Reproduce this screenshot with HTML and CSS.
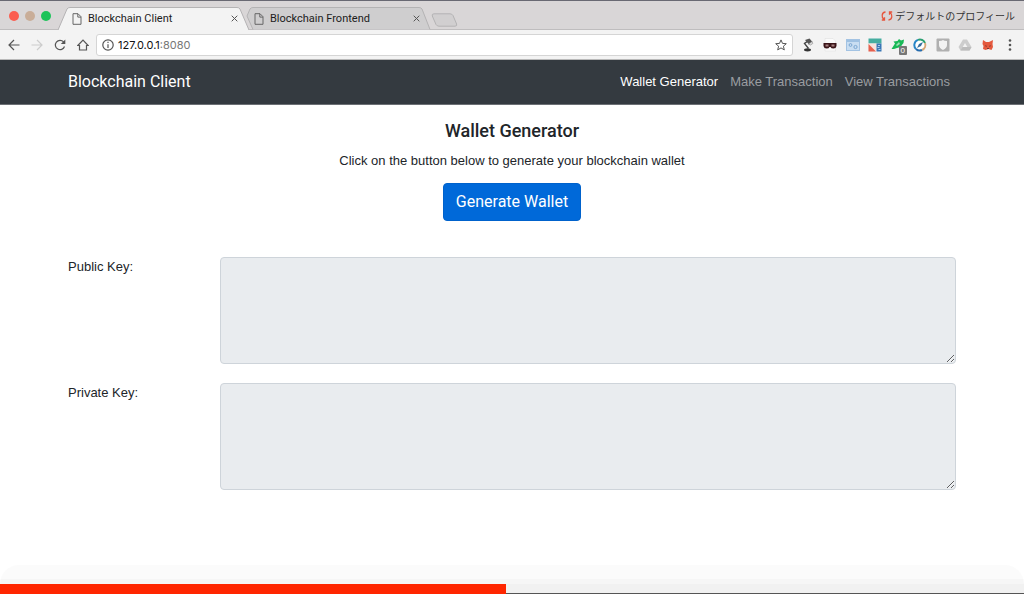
FILE: index.html
```html
<!DOCTYPE html>
<html lang="en">
<head>
<meta charset="utf-8">
<meta name="viewport" content="width=device-width, initial-scale=1">
<title>Blockchain Client</title>
<link rel="stylesheet" href="styles.css">
</head>
<body>
<header class="browser">
  <div class="tab-strip">
    <div class="lights">
      <button class="light light-close" aria-label="Close window"></button>
      <button class="light light-min" aria-label="Minimise window"></button>
      <button class="light light-max" aria-label="Maximise window"></button>
    </div>
    <div class="tabs">
      <div class="tab tab-active">
        <svg class="tab-shape" viewBox="0 0 191 23" preserveAspectRatio="none" aria-hidden="true"><path d="M0 23 L9 2 Q10 .5 12 .5 H179 Q181 .5 182 2 L191 23"/></svg>
        <svg class="page-icon" viewBox="0 0 10 12" aria-hidden="true"><path d="M1 .7h5l3 3v7.6H1zM5.8.9v3.2H9"/></svg>
        <span class="tab-title">Blockchain Client</span>
        <button class="tab-close" aria-label="Close tab"><svg viewBox="0 0 7 7" aria-hidden="true"><path d="M.7.7l5.6 5.6M6.3.7L.7 6.3"/></svg></button>
      </div>
      <div class="tab tab-back">
        <svg class="tab-shape" viewBox="0 0 191 23" preserveAspectRatio="none" aria-hidden="true"><path d="M13 22.5 L7 9 L10 2 Q11 .5 13 .5 H179 Q181 .5 182 2 L190 22.5"/></svg>
        <svg class="page-icon" viewBox="0 0 10 12" aria-hidden="true"><path d="M1 .7h5l3 3v7.6H1zM5.8.9v3.2H9"/></svg>
        <span class="tab-title">Blockchain Frontend</span>
        <button class="tab-close" aria-label="Close tab"><svg viewBox="0 0 7 7" aria-hidden="true"><path d="M.7.7l5.6 5.6M6.3.7L.7 6.3"/></svg></button>
      </div>
      <button class="new-tab" aria-label="New tab"><svg viewBox="0 0 27 14" aria-hidden="true"><path d="M3 .8H19Q21 .8 22 2.5L25.6 11Q26.3 13.2 24 13.2H8Q6 13.2 5 11.5L1.3 3Q.6 .8 3 .8z"/></svg></button>
    </div>
    <button class="profile"><svg viewBox="0 0 12 10" aria-hidden="true"><path d="M4.500 1C.5 1.200.2 6.500 3 8.500M.8 9H3.500V6.300M7.500 9C11.500 8.800 11.800 3.500 9 1.500M11.200 1H8.500V3.700"/></svg>デフォルトのプロフィール</button>
  </div>
  <div class="toolbar">
    <div class="nav-buttons">
      <button class="tool" aria-label="Back"><svg viewBox="0 0 12 12" aria-hidden="true"><path d="M11.500 6H1M6 1L1 6l5 5"/></svg></button>
      <button class="tool tool-off" aria-label="Forward" disabled><svg viewBox="0 0 12 12" aria-hidden="true"><path d="M.5 6H11M6 1l5 5-5 5"/></svg></button>
      <button class="tool" aria-label="Reload"><svg viewBox="0 0 12 12" aria-hidden="true"><path d="M10.500 7.500A4.700 4.700 0 1 1 9.600 2.900"/><path class="solid" d="M11.300.5V5H6.800z"/></svg></button>
      <button class="tool" aria-label="Home"><svg viewBox="0 0 12 12" aria-hidden="true"><path d="M.8 6.500L6 1.200l5.200 5.300H9.500V11h-7V6.500z"/></svg></button>
    </div>
    <div class="address">
      <svg class="info" viewBox="0 0 12 12" aria-hidden="true"><circle cx="6" cy="6" r="5.200"/><path d="M6 5.200V9M6 2.800V4"/></svg>
      <a class="url" href="#"><span class="host">127.0.0.1</span>:8080</a>
      <button class="star" aria-label="Bookmark this page"><svg viewBox="0 0 12 12" aria-hidden="true"><path d="M6 .9l1.500 3.500 3.800.3-2.900 2.500.9 3.700L6 8.900l-3.300 2 .9-3.700L.7 4.700l3.800-.3z"/></svg></button>
    </div>
    <div class="extensions">
      <button class="ext" aria-label="Lamp"><svg viewBox="0 0 14 14" aria-hidden="true"><path d="M7 3L3.500 5.500l4 5" fill="none" stroke="#444" stroke-width="1.400"/><path d="M4 2l4.500-1.500L11.500 4 8 6.500z" fill="#555"/><path d="M7.500 6l3.500-2.500.8 2L9.500 7z" fill="#ddd" stroke="#777" stroke-width=".5"/><ellipse cx="6.500" cy="11.800" rx="3.500" ry="1.600" fill="#333"/></svg></button>
      <button class="ext" aria-label="Mask"><svg viewBox="0 0 14 14" aria-hidden="true"><path d="M2 .5h8l2.500 2.500V13H2z" fill="#fafafa" stroke="#ddd" stroke-width=".5"/><path d="M.5 5h13v3q-.5 2.500-3 2.500T7.500 9h-1q-.5 1.500-3 1.500T.5 8z" fill="#3a1518"/><path d="M2.500 6.500h3v2h-3zM8.500 6.500h3v2h-3z" fill="#a68080"/></svg></button>
      <button class="ext" aria-label="Window settings"><svg viewBox="0 0 14 14" aria-hidden="true"><rect x=".5" y="1.500" width="13" height="11" fill="#c9def2" stroke="#a3c3e3"/><path d="M1 2h12v2H1z" fill="#9fc1e2"/><circle cx="4.500" cy="7" r="1.400" fill="none" stroke="#7ba7d2"/><circle cx="9.500" cy="9" r="1.600" fill="none" stroke="#7ba7d2"/></svg></button>
      <button class="ext" aria-label="Measure"><svg viewBox="0 0 14 14" aria-hidden="true"><path d="M.5 .5h13v5H.5z" fill="#45ada0"/><path d="M.5 5.500h8v8h-8z" fill="#f7e3de"/><path d="M.5 6L8 13.500H.5z" fill="#e5604e"/><path d="M8.500 5.500h5v8h-5z" fill="#3976b5"/><path d="M10 7h2v1h-2zM9.500 9h2v1h-2zM10.500 11h2v1h-2z" fill="#a9cdec"/></svg></button>
      <button class="ext" aria-label="Feed, 0 items"><svg viewBox="0 0 14 14" aria-hidden="true"><path d="M.5 11L4 5.500 2.500 3.500l4-.5L8 1l2 1.500 3-1L12.500 5l-2 2.500 1 3.500-4-1.500L3 11z" fill="#18b957"/><path d="M5 7l3-3 1 2-3 2z" fill="#9ee0b5"/></svg><span class="badge">0</span></button>
      <button class="ext" aria-label="Compass"><svg viewBox="0 0 14 14" aria-hidden="true"><circle cx="7" cy="7" r="5.500" fill="#fff"/><g fill="none" stroke-width="2"><path d="M3 11A5.500 5.500 0 0 1 5 1.900" stroke="#2685c7"/><path d="M5 1.900A5.500 5.500 0 0 1 12 5" stroke="#2a9f70"/><path d="M12 5A5.500 5.500 0 0 1 9 12" stroke="#d7a574"/><path d="M9 12A5.500 5.500 0 0 1 3 11" stroke="#256cae"/></g><path d="M10 4L8 8l-4 2 2-4z" fill="#336d9c"/></svg></button>
      <button class="ext" aria-label="Shield"><svg viewBox="0 0 14 14" aria-hidden="true"><rect x=".5" y=".5" width="13" height="13" rx="1" fill="#b0b0b0"/><path d="M3 3q3 0 4-1 1 1 4 1v4q0 3-4 5-4-2-4-5z" fill="#f2f2f2"/></svg></button>
      <button class="ext" aria-label="Drive"><svg viewBox="0 0 14 14" aria-hidden="true"><path d="M5 1.500h4L13.500 9l-2 3.500h-9L.5 9z" fill="#cdcdcd"/><path d="M7 5l2.300 4H4.700z" fill="#f3f3f3"/><path d="M4.700 9h8.800l-2 3.500h-9z" fill="#bdbdbd"/></svg></button>
      <button class="ext" aria-label="Fox wallet"><svg viewBox="0 0 14 14" aria-hidden="true"><path d="M2 2l3 2h3l4-2-.5 4 .5 3-1.500 3-3-1-3 1L2 11l.5-3L1.500 6z" fill="#e4583d"/><path d="M4 7l2 1-1 1zM10 7L8 8l1 1zM6 10h2v1H6z" fill="#7b3630"/></svg></button>
      <button class="ext" aria-label="Menu"><svg viewBox="0 0 14 14" aria-hidden="true"><g fill="#555"><circle cx="7" cy="2.500" r="1.300"/><circle cx="7" cy="7" r="1.300"/><circle cx="7" cy="11.500" r="1.300"/></g></svg></button>
    </div>
  </div>
</header>
<nav class="navbar">
  <div class="container navbar-row">
    <a class="brand" href="#">Blockchain Client</a>
    <div class="links">
      <a class="link link-active" href="#">Wallet Generator</a>
      <a class="link" href="#">Make Transaction</a>
      <a class="link" href="#">View Transactions</a>
    </div>
  </div>
</nav>
<main class="container content">
  <div class="intro">
    <h1 class="title">Wallet Generator</h1>
    <p class="lead">Click on the button below to generate your blockchain wallet</p>
    <button class="generate">Generate Wallet</button>
  </div>
  <form class="keys">
    <div class="key-row">
      <label class="key-label" for="public-key">Public Key:</label>
      <textarea class="key-box" id="public-key" readonly></textarea>
    </div>
    <div class="key-row">
      <label class="key-label" for="private-key">Private Key:</label>
      <textarea class="key-box" id="private-key" readonly></textarea>
    </div>
  </form>
</main>
<footer class="player">
  <div class="shade"></div>
  <div class="progress" role="progressbar" aria-label="Playback" aria-valuenow="49"><div class="played"></div></div>
</footer>
</body>
</html>
```

FILE: styles.css
```css
* { box-sizing: border-box; }
body {
  margin: 0;
  min-height: 100vh;
  display: flex;
  flex-direction: column;
  background: #fff;
  color: #212529;
  font-family: "Liberation Sans", "Noto Sans CJK JP", sans-serif;
  font-size: 13px;
  line-height: 20px;
}
button { margin: 0; padding: 0; border: 0; background: none; color: inherit; font: inherit; }
a { text-decoration: none; }
svg { display: block; flex: none; fill: none; }

/* Browser window */
.tab-strip {
  display: flex;
  align-items: flex-end;
  height: 30px;
  border-top: 1px solid #696973;
  box-shadow: inset 0 -1px #bfbdbe;
  background: #d9d6d7;
}
.lights { display: flex; gap: 6px; padding: 0 7px 9px 9px; }
.light { width: 10px; height: 10px; border-radius: 50%; }
.light-close { background: #fb5d50; }
.light-min { background: #c9ad98; }
.light-max { background: #1cc359; }
.tabs { display: flex; align-items: flex-end; flex: 1; }
.tab {
  position: relative;
  display: flex;
  align-items: center;
  flex: 0 1 191px;
  height: 23px;
  padding: 0 9px 0 14px;
  color: #1c1c1c;
}
.tab-active { z-index: 1; }
.tab-back { margin-left: -9px; }
.tab-shape { position: absolute; inset: 0; width: 100%; height: 100%; fill: #cfcecf; stroke: #b4b3b4; }
.tab-active .tab-shape { fill: #f3f3f3; }
.tab > :not(.tab-shape) { position: relative; }
.page-icon { width: 10px; height: 12px; stroke: #666; }
.tab-title { flex: 1; margin-left: 6px; font-family: Roboto, sans-serif; font-size: 11px; white-space: nowrap; }
.tab-close { padding: 2px; }
.tab-close svg { width: 7px; height: 7px; stroke: #555; }
.new-tab { margin-bottom: 3px; }
.new-tab svg { width: 27px; height: 14px; fill: #d1cfd0; stroke: #b4b3b4; }
.profile {
  display: flex;
  align-items: center;
  gap: 2px;
  padding: 0 9px 4px 0;
  color: #333;
  font-family: "Noto Sans CJK JP", sans-serif;
  font-size: 10px;
}
.profile svg { width: 12px; height: 10px; stroke: #e6563e; stroke-width: 1.3; }
.toolbar {
  display: flex;
  align-items: center;
  height: 30px;
  border-bottom: 1px solid #b9b9b9;
  background: #f3f3f3;
}
.nav-buttons { display: flex; gap: 11px; padding: 0 7px 0 8px; }
.tool svg { width: 12px; height: 12px; stroke: #555; stroke-width: 1.2; }
.tool .solid { fill: #555; stroke: none; }
.tool-off svg { stroke: #ccc; }
.address {
  display: flex;
  align-items: center;
  flex: 1;
  height: 22px;
  padding: 0 5px;
  border: 1px solid #d5d5d5;
  border-radius: 3px;
  background: #fff;
}
.info { width: 12px; height: 12px; stroke: #555; stroke-width: 1.2; }
.url { flex: 1; margin-left: 4px; color: #777; font-family: Inter, sans-serif; font-size: 11px; }
.host { color: #111; }
.star svg { width: 12px; height: 12px; stroke: #555; }
.extensions { display: flex; justify-content: space-between; width: 231px; padding: 0 7px 0 8px; }
.ext { position: relative; }
.ext svg { width: 14px; height: 14px; }
.badge {
  position: absolute;
  right: -2px;
  bottom: -3px;
  width: 8px;
  border-radius: 1px;
  background: #777;
  color: #fff;
  font-size: 8px;
  line-height: 9px;
}

/* Page */
.container { width: 100%; max-width: 912px; margin: 0 auto; padding: 0 12px; }
.navbar { border-bottom: 1px solid #6c7075; background: #343a40; }
.navbar-row { display: flex; align-items: center; justify-content: space-between; height: 44px; }
.brand { color: #fff; font-family: Roboto, sans-serif; font-size: 16px; }
.links { display: flex; gap: 12px; padding-right: 6px; }
.link { color: #9a9da0; }
.link-active { color: #fff; }
.content { flex: 1; padding-top: 14px; }
.intro { display: flex; flex-direction: column; align-items: center; }
.title { margin: 0 0 8px; font-family: Roboto, sans-serif; font-size: 18px; font-weight: 500; line-height: 24px; }
.lead { margin: 0 0 12px; }
.generate {
  padding: 8px 12px;
  border: 1px solid #0062cc;
  border-radius: 4px;
  background: #0069d9;
  color: #fff;
  font-family: Roboto, sans-serif;
  font-size: 16px;
}
.keys { display: flex; flex-direction: column; gap: 19px; margin-top: 36px; }
.key-row { display: grid; grid-template-columns: 1fr 5fr; column-gap: 5px; }
.key-label { display: block; }
.key-box {
  width: 100%;
  height: 107px;
  padding: 5px 10px;
  border: 1px solid #ced4da;
  border-radius: 4px;
  background: #e9ecef;
  font: inherit;
}

/* Playback overlay */
.player { background: #fff; }
.shade {
  height: 19px;
  border-radius: 24px 24px 0 0;
  background: linear-gradient(#fbfbfb 14px, #f6f6f6 14px);
}
.progress { height: 10px; border-bottom: 1px solid #555; background: #f1f1f1; }
.played { width: 49.4%; height: 10px; background: #ff2600; }
```
